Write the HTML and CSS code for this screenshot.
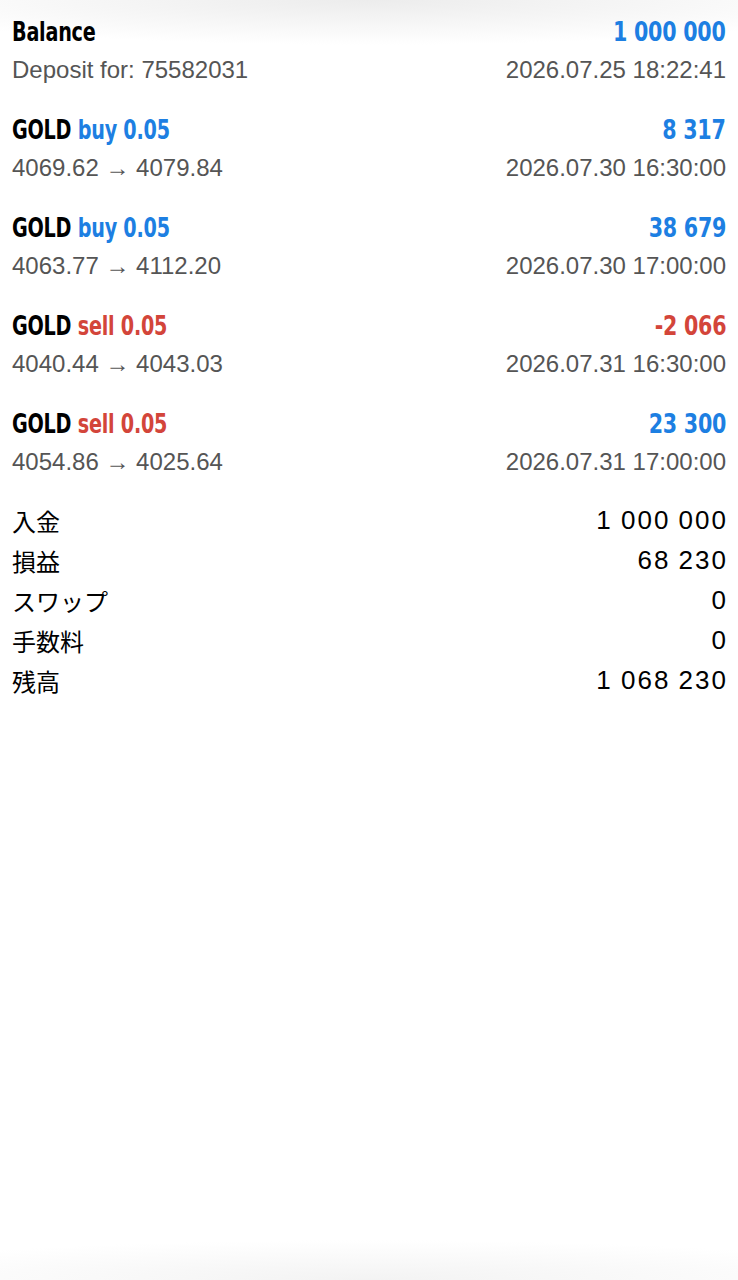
FILE: index.html
```html
<!DOCTYPE html>
<html lang="ja">
<head>
  <meta charset="UTF-8">
  <title>History</title>
  <link rel="stylesheet" href="styles.css">
</head>
<body>

<div class="history">
  <div class="deal">
    <div class="row title">
      <span class="name">Balance</span>
      <span class="amount profit">1 000 000</span>
    </div>
    <div class="row sub">
      <span>Deposit for: 75582031</span>
      <span>2026.07.25 18:22:41</span>
    </div>
  </div>

  <div class="deal">
    <div class="row title">
      <span class="name">GOLD <span class="buy">buy 0.05</span></span>
      <span class="amount profit">8 317</span>
    </div>
    <div class="row sub">
      <span>4069.62 &rarr; 4079.84</span>
      <span>2026.07.30 16:30:00</span>
    </div>
  </div>

  <div class="deal">
    <div class="row title">
      <span class="name">GOLD <span class="buy">buy 0.05</span></span>
      <span class="amount profit">38 679</span>
    </div>
    <div class="row sub">
      <span>4063.77 &rarr; 4112.20</span>
      <span>2026.07.30 17:00:00</span>
    </div>
  </div>

  <div class="deal">
    <div class="row title">
      <span class="name">GOLD <span class="sell">sell 0.05</span></span>
      <span class="amount loss">-2 066</span>
    </div>
    <div class="row sub">
      <span>4040.44 &rarr; 4043.03</span>
      <span>2026.07.31 16:30:00</span>
    </div>
  </div>

  <div class="deal">
    <div class="row title">
      <span class="name">GOLD <span class="sell">sell 0.05</span></span>
      <span class="amount profit">23 300</span>
    </div>
    <div class="row sub">
      <span>4054.86 &rarr; 4025.64</span>
      <span>2026.07.31 17:00:00</span>
    </div>
  </div>
</div>

<div class="summary">
  <div class="row"><span class="label">入金</span><span class="num">1 000 000</span></div>
  <div class="row"><span class="label">損益</span><span class="num">68 230</span></div>
  <div class="row"><span class="label">スワップ</span><span class="num">0</span></div>
  <div class="row"><span class="label">手数料</span><span class="num">0</span></div>
  <div class="row"><span class="label">残高</span><span class="num">1 068 230</span></div>
</div>

</body>
</html>
```

FILE: styles.css
```css
html {
  background: #fff;
}

body {
  margin: 0;
  min-height: 1280px;
  font-family: 'Liberation Sans', Arial, sans-serif;
  color: #000;
  background:
    radial-gradient(ellipse 70% 45px at 50% 0, #ececec, rgba(255,255,255,0)),
    radial-gradient(ellipse 75% 40px at 50% 1280px, #f3f3f3, rgba(255,255,255,0)),
    #fff;
  background-repeat: no-repeat;
}

.row {
  display: flex;
  justify-content: space-between;
  align-items: center;
}

.deal {
  padding: 13px 12px 10px;
}

/* no condensed bold installed, so squeeze DejaVu Condensed */
.title {
  height: 36px;
  font-family: 'DejaVu Sans Condensed', sans-serif;
  font-weight: bold;
  font-size: 27px;
  letter-spacing: -0.3px;
}

.title .name,
.title .amount {
  display: inline-block;
  white-space: nowrap;
}

.title .name {
  transform: scaleX(0.79);
  transform-origin: left center;
}

.title .amount {
  transform: scaleX(0.85);
  transform-origin: right center;
}

.sub {
  height: 36px;
  margin-top: 3px;
  font-size: 24px;
  color: #555;
}

.buy,
.profit {
  color: #1d7fe2;
}

.sell,
.loss {
  color: #d3453a;
}

.summary {
  padding: 10px 12px 0;
}

.summary .row {
  height: 40px;
  font-size: 26px;
}

.summary .num {
  letter-spacing: 2px;
  word-spacing: -1px;
  margin-right: -2px;
}

.summary .label {
  font-family: 'Noto Sans CJK JP', sans-serif;
  font-size: 24px;
}
```
